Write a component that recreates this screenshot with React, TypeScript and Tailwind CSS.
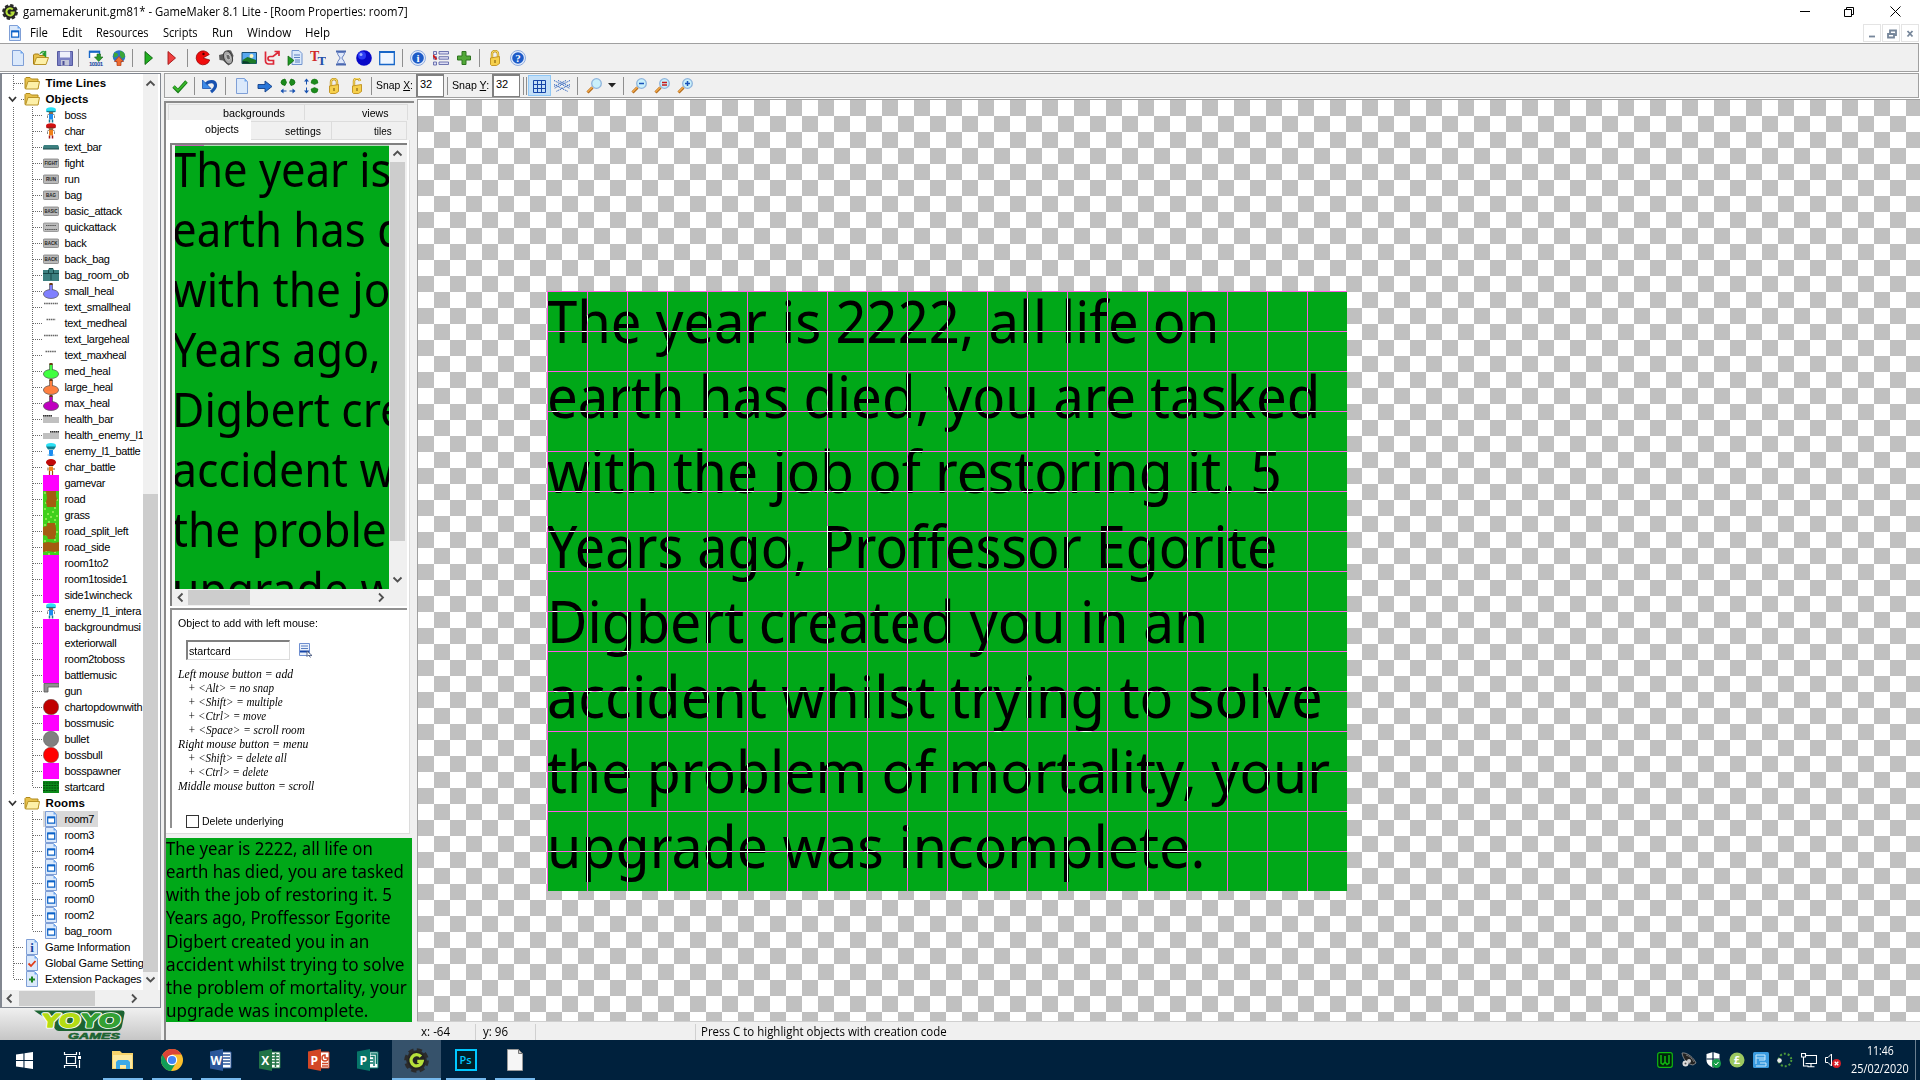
import { useLayoutEffect, useRef, type ReactNode } from "react";

/* Text squeezed or stretched horizontally to an exact width. */
function Fit({ w, className = "", children }: { w: number; className?: string; children: ReactNode }) {
  const ref = useRef<HTMLSpanElement>(null);
  useLayoutEffect(() => {
    const el = ref.current;
    if (el && el.offsetWidth) el.style.transform = `scaleX(${w / el.offsetWidth})`;
  }, [w]);
  return (
    <span className={`block shrink-0 whitespace-nowrap ${className}`} style={{ width: w }}>
      <span ref={ref} className="inline-block origin-left">{children}</span>
    </span>
  );
}

const STORY: [string, number][] = [
  ["The year is 2222, all life on", 672],
  ["earth has died, you are tasked", 773],
  ["with the job of restoring it. 5", 735],
  ["Years ago, Proffessor Egorite", 730],
  ["Digbert created you in an", 661],
  ["accident whilst trying to solve", 776],
  ["the problem of mortality, your", 783],
  ["upgrade was incomplete.", 658],
];

function Card({ className = "" }: { className?: string }) {
  return (
    <div className={`h-[600px] w-[800px] shrink-0 overflow-hidden bg-[#00a818] font-['Noto_Sans'] text-[59px] leading-[75px] text-black ${className}`}>
      <div className="-mt-[8px]">
        {STORY.map(([t, w]) => (
          <Fit key={t} w={w}>{t}</Fit>
        ))}
      </div>
    </div>
  );
}

function Ico({ children, s = 16 }: { children: ReactNode; s?: number }) {
  return (
    <svg width={s} height={s} viewBox="0 0 16 16" className="block shrink-0">{children}</svg>
  );
}

const Page = () => (
  <>
    <path d="M2.5.5h8l3 3v12h-11z" fill="#dbe9fb" stroke="#7f9fd6" />
    <path d="M10.5.5v3h3z" fill="#6fa8f0" />
  </>
);
const Lock = ({ open = false }: { open?: boolean }) => (
  <Ico>
    <path d={open ? "M5 8V4a3 3 0 0 1 6 -1" : "M5 8V4a3 3 0 0 1 6 0v4"} fill="none" stroke="#b88a14" strokeWidth="2.4" />
    <path d={open ? "M5 8V4a3 3 0 0 1 6 -1" : "M5 8V4a3 3 0 0 1 6 0v4"} fill="none" stroke="#f7dc6a" strokeWidth="1.2" />
    <path d="M3.5 8l9-1.500v7l-3 2h-5l-1-1z" fill="#f6d04c" stroke="#c0901c" strokeWidth=".900" />
    <path d="M8 10v3" stroke="#8a6410" strokeWidth="1.200" />
  </Ico>
);
const Ball = ({ t }: { t: string }) => (
  <Ico>
    <circle cx="8" cy="8" r="7.500" fill="#e4edfb" stroke="#8fabdc" />
    <circle cx="8" cy="8" r="5.800" fill="#1d5bc8" />
    <text x="8" y="11.800" textAnchor="middle" className="font-['Liberation_Serif'] text-[11px] font-bold" fill="#fff">{t}</text>
  </Ico>
);
const Lens = ({ sign }: { sign?: ReactNode }) => (
  <Ico>
    <path d="M1.500 14.500l5-5" stroke="#b0691a" strokeWidth="3" />
    <path d="M1.500 14l5-5" stroke="#f3a848" strokeWidth="1.400" />
    <circle cx="10.500" cy="5.500" r="4.800" fill="#c9f0fb" stroke="#8fb4dc" strokeWidth="1.300" />
    {sign}
  </Ico>
);
const DocPage = ({ children }: { children?: ReactNode }) => <Ico><Page />{children}</Ico>;
const RoomIcon = () => (
  <DocPage>
    <path d="M4.700 6.200h7v6h-7z" fill="#fff" stroke="#0b62c8" strokeWidth="1.200" />
    <path d="M4.500 6.500h7.400" stroke="#0b62c8" strokeWidth="1.800" />
  </DocPage>
);
const Folder = () => (
  <Ico>
    <path d="M1 13.500V3.500l1-1h4l1.500 1.500H14v9.500z" fill="#e7c04a" stroke="#b08a1c" />
    <path d="M1.500 14L4 6.500h11.500L14 14z" fill="#fdf0a8" stroke="#b99428" />
  </Ico>
);
const Gear = ({ s = 16 }: { s?: number }) => (
  <Ico s={s}>
    <circle cx="8" cy="8" r="6.600" fill="#2b2b2b" stroke="#2b2b2b" strokeWidth="2.600" strokeDasharray="3.200 1.980" />
    <circle cx="8" cy="8" r="5.600" fill="#222" />
    <path d="M10.800 5.500A3.600 3.600 0 1 0 11.600 8.600H8.500" fill="none" stroke="#b6e03a" strokeWidth="2.100" />
  </Ico>
);

type Item = { x: number; icon: ReactNode };
const Sep = () => <div className="h-[18px] w-px bg-[#8f8f8f]" />;

/* Lays toolbar items out at their centre positions by flow margins. */
function Bar({ items, start }: { items: (Item & { w?: number })[]; start: number }) {
  let at = start;
  return (
    <div className="flex h-full items-center">
      {items.map((it, i) => {
        const w = it.w ?? 16;
        const left = Math.round(it.x - w / 2);
        const gap = left - at;
        at = left + w;
        return <div key={i} className="flex shrink-0 justify-center" style={{ marginLeft: gap, width: w }}>{it.icon}</div>;
      })}
    </div>
  );
}

const MAIN: (Item & { w?: number })[] = [
  { x: 18, icon: <DocPage /> },
  { x: 40.5, icon: <Ico><path d="M.5 14V5l1-1h4l1 1.500h6V14z" fill="#e7c04a" stroke="#a87f14" /><path d="M1 14.500l2.500-7h12L13 14.500z" fill="#fdf0a8" stroke="#b99428" /><path d="M7 4c1-3 4-3.500 5.500-1.500V1M12.800 1v6L9.500 4z" fill="#1d9a2c" stroke="#1d9a2c" strokeWidth=".800" /></Ico> },
  { x: 64.5, icon: <Ico><path d="M.5 1.500h15v14h-15z" fill="#7a80c4" stroke="#5559a0" /><path d="M3 1.500h10v6H3z" fill="#eef0fb" /><path d="M4 10h8v5.500H4z" fill="#c3c6d8" /><path d="M5.500 11h2v4h-2z" fill="#4b4f98" /></Ico> },
  { x: 78, w: 1, icon: <Sep /> },
  { x: 95.5, icon: <Ico><path d="M1.500 8V1.500h10V5" fill="#fff" stroke="#1766c8" strokeWidth="1.400" /><path d="M1 1.800h11" stroke="#1766c8" strokeWidth="2" /><path d="M9 4h3.500v3H15l-4.300 4.500L6.500 7H9z" fill="#2c9b2c" stroke="#17661a" strokeWidth=".600" /><text x="8" y="16" textAnchor="middle" textLength="14" className="font-['Liberation_Sans'] text-[6px] font-bold" fill="#1545a0">10101</text></Ico> },
  { x: 118.5, icon: <Ico><circle cx="8" cy="6.500" r="6.300" fill="#2a72c8" /><path d="M3 2.500c2 0 5 1 4 3S3 6 2.500 9M9 .8c4 1 5 3 5 6l-3 2-2-3z" fill="#3aa53a" /><path d="M6 15.500V11.500H3.500L8 6.500l4.500 5H10v4z" fill="#ef6c30" stroke="#b83a12" strokeWidth=".700" /></Ico> },
  { x: 132, w: 1, icon: <Sep /> },
  { x: 149, icon: <Ico><path d="M4 1.500v13l7.500-6.500z" fill="#22b022" stroke="#0d5f0d" strokeWidth=".900" /></Ico> },
  { x: 172, icon: <Ico><path d="M4 1.500v13l7.500-6.500z" fill="#f04040" stroke="#a01414" strokeWidth=".900" /></Ico> },
  { x: 187, w: 1, icon: <Sep /> },
  { x: 203, icon: <Ico><path d="M8 8l6.300-3.500A7 7 0 1 0 14.800 10z" fill="#f00c0c" stroke="#8c0000" strokeWidth=".700" /><circle cx="8.500" cy="4" r="1.200" fill="#500" /></Ico> },
  { x: 226, icon: <Ico><path d="M1 5l4-1 5-4 3 .5 2.500 5L14 12l-3.500 3.500L5 10.500 1.500 10z" fill="#5e5e5e" /><ellipse cx="10" cy="7.500" rx="4.200" ry="6.800" transform="rotate(-20 10 7.500)" fill="#a8a8a8" stroke="#3c3c3c" /><ellipse cx="10.300" cy="7.200" rx="2" ry="3" transform="rotate(-20 10 7.500)" fill="#666" stroke="#e0e0e0" strokeWidth=".700" /></Ico> },
  { x: 249, icon: <Ico><path d="M1 2.500h14.500v11H1z" fill="#58a8f0" stroke="#174f78" /><path d="M1.500 10l5-3 8.500 3v3.500H1.500z" fill="#1c7a28" /><path d="M1.500 11l5 .5 3 2h-8z" fill="#0b3c2c" /><circle cx="10.500" cy="6" r="2" fill="#fdf6c0" /></Ico> },
  { x: 271.5, icon: <Ico><path d="M1.500 1.500v9.500a3 3 0 0 0 3 3h5v-3.500H6a1.500 1.500 0 0 1 0-4h3l5-4M10.500 1.500h4.500v4.500" fill="none" stroke="#dc2838" strokeWidth="1.700" /></Ico> },
  { x: 295, icon: <Ico><path d="M5 .5h7l3 3v11H5z" fill="#dbe9fb" stroke="#6f92ce" /><path d="M7 5h6M7 7.500h6M8 10h5M8 12h5" stroke="#5a7fc0" /><path d="M1 6v9.500L7 10.500z" fill="#1f9a24" stroke="#0d5f0d" strokeWidth=".700" /></Ico> },
  { x: 318, icon: <Ico><text x="0" y="11" className="font-['Liberation_Serif'] text-[14px] font-bold" fill="#d02828">T</text><text x="7.500" y="14.500" className="font-['Liberation_Serif'] text-[13px] font-bold" fill="#2450a8">T</text></Ico> },
  { x: 341, icon: <Ico><path d="M3 1.500h10M3 14.500h10" stroke="#4a68b0" strokeWidth="2" /><path d="M4.500 2.500c0 3.500 2.500 4 2.500 5.500s-2.500 2-2.500 5.500h7C11.500 10 9 9.500 9 8s2.500-2 2.500-5.500z" fill="#dfe8fa" stroke="#6680c0" /></Ico> },
  { x: 364, icon: <Ico><circle cx="8" cy="8" r="7.800" fill="#0808c8" /><circle cx="6" cy="5.500" r="4" fill="#2c3cf4" /><circle cx="5" cy="4.500" r="1.500" fill="#9fb0ff" /></Ico> },
  { x: 387, icon: <Ico><path d="M.7 1.700h14.600v12.800H.7z" fill="#eff6ff" stroke="#1766c8" strokeWidth="1.300" /><path d="M.5 2h15" stroke="#1766c8" strokeWidth="2" /></Ico> },
  { x: 402, w: 1, icon: <Sep /> },
  { x: 418, icon: <Ball t="i" /> },
  { x: 441, icon: <Ico><path d="M.5 1.500h3v3h-3zM.5 6.700h3v2.500h-3zM.5 12h3v3h-3zM6 1.500h9.500v2.500H6zM6 6.700h9.500v2.500H6zM6 12h9.500v2.500H6z" fill="#dcdcf2" stroke="#6068a8" strokeWidth=".900" /><path d="M0 5l3.500 4.500" stroke="#d01c1c" strokeWidth="2" /></Ico> },
  { x: 464, icon: <Ico><path d="M6 1.500h4V6h4.500v4H10v4.500H6V10H1.500V6H6z" fill="#52a838" stroke="#2f7420" /></Ico> },
  { x: 479, w: 1, icon: <Sep /> },
  { x: 495, icon: <Lock /> },
  { x: 518, icon: <Ball t="?" /> },
];

const SnapLabel = ({ c }: { c: string }) => (
  <Fit w={37} className="font-['Liberation_Sans'] text-[11.500px] leading-[15px]">Snap <u>{c}</u>:</Fit>
);
const SnapBox = () => (
  <div className="h-[23px] w-[28px] border-t-2 border-l-2 border-r border-b border-[#808080] bg-white pl-[2px] font-['Liberation_Sans'] text-[11px] leading-[17px]">32</div>
);

const ROOMBAR: (Item & { w?: number })[] = [
  { x: 180, icon: <Ico><path d="M1.500 8.500L6 13 14.500 3.500" fill="none" stroke="#177a17" strokeWidth="3.400" /><path d="M1.800 8.500L6 12.500 14.200 3.800" fill="none" stroke="#3cb82c" strokeWidth="1.800" /></Ico> },
  { x: 194, w: 1, icon: <Sep /> },
  { x: 210, icon: <Ico><path d="M3.500 6.500C7 2.500 13 2.500 13.500 7c.3 3-2 5-4.500 7" fill="none" stroke="#1852b0" strokeWidth="3.200" /><path d="M.5 2v8.500H9z" fill="#3d8be8" stroke="#1852b0" strokeWidth=".800" /></Ico> },
  { x: 225, w: 1, icon: <Sep /> },
  { x: 242, icon: <DocPage /> },
  { x: 265, icon: <Ico><path d="M1 6.500h7V3l7 5.500L8 14v-3.500H1z" fill="#2a76d8" stroke="#123f88" strokeWidth=".900" /></Ico> },
  { x: 288, icon: <Ico><path d="M5 1L6.500 4.500 5 7.500Q1 7 1 4.300T5 1zM11 1L9.500 4.500 11 7.500Q15 7 15 4.300T11 1z" fill="#1c8a1c" stroke="#0d6f0d" strokeWidth=".800" /><path d="M1.500 13h5M9.500 13h5" stroke="#1852b0" /><path d="M3.500 10.500v5L.5 13zM12.500 10.500v5l3-2.500z" fill="#1852b0" /></Ico> },
  { x: 311, icon: <Ico><path d="M8 5q0-4 3.500-4T15 5l-3.500 1.500zM8 11q0 4 3.500 4t3.500-4l-3.500-1.500z" fill="#1c8a1c" stroke="#0d6f0d" strokeWidth=".500" /><path d="M3.500 1.500v5M3.500 9.500v5" stroke="#1852b0" /><path d="M1 3.500h5L3.500.5zM1 12.500h5l-2.500 3z" fill="#1852b0" /></Ico> },
  { x: 334, icon: <Lock /> },
  { x: 357, icon: <Lock open /> },
  { x: 371, w: 1, icon: <Sep /> },
  { x: 394, w: 37, icon: <SnapLabel c="X" /> },
  { x: 430, w: 28, icon: <SnapBox /> },
  { x: 447, w: 1, icon: <Sep /> },
  { x: 470, w: 37, icon: <SnapLabel c="Y" /> },
  { x: 506, w: 28, icon: <SnapBox /> },
  { x: 523, w: 1, icon: <Sep /> },
  { x: 526, w: 1, icon: <Sep /> },
  { x: 539.5, w: 23, icon: <div className="flex h-[21px] w-[23px] items-center justify-center border border-[#90c8f6] bg-[#c4e0f8]"><Ico><path d="M1.500 2.500h12v12h-12zM1.500 6.500h12M1.500 10.500h12M5.500 2.500v12M9.500 2.500v12" fill="none" stroke="#1545a8" /></Ico></div> },
  { x: 562, icon: <Ico><path d="M0 2.500l16 8M0 6.500l14 7M4 2.500l12 6M16 2.500l-16 8M16 6.500l-14 7M12 2.500L0 8.500" stroke="#1852b8" strokeWidth=".900" strokeDasharray="1.500 1" /></Ico> },
  { x: 577, w: 1, icon: <Sep /> },
  { x: 594, icon: <Lens /> },
  { x: 612, w: 8, icon: <svg width="8" height="5" className="block"><path d="M0 0h8L4 4.500z" fill="#222" /></svg> },
  { x: 623, w: 1, icon: <Sep /> },
  { x: 639, icon: <Lens sign={<path d="M8 5.500h5" stroke="#1852b8" strokeWidth="1.500" />} /> },
  { x: 662, icon: <Lens sign={<path d="M8 4.500h5M8 7h5" stroke="#c81818" strokeWidth="1.300" />} /> },
  { x: 685, icon: <Lens sign={<path d="M8 5.500h5M10.500 3v5" stroke="#1852b8" strokeWidth="1.500" />} /> },
];

/* Thumbnails of the objects in the resource tree */
const Pink = () => <div className="h-4 w-4 bg-[#ff00ff]" />;
const Tag = ({ t }: { t: string }) => (
  <Ico><rect x=".4" y="4" width="15.200" height="8.500" rx="1" fill="#b8b8b8" stroke="#7c7c7c" strokeWidth=".800" /><text x="8" y="10.400" textAnchor="middle" textLength={t.length > 3 ? 13 : 10} lengthAdjust="spacingAndGlyphs" className="font-['Liberation_Sans'] text-[6px] font-bold" fill="#222">{t}</text></Ico>
);
const Potion = ({ c }: { c: string }) => (
  <Ico><path d="M6.500 1h3v6h-3z" fill={c} stroke="#444" strokeWidth=".600" /><path d="M6.500 0h3v2h-3z" fill="#6b3a10" /><ellipse cx="8" cy="11" rx="7.600" ry="4.500" fill={c} stroke="#555" strokeWidth=".700" /><path d="M7 5h2v3H7z" fill={c} /></Ico>
);
const Guy = ({ a, b, c = "#a01818" }: { a: string; b: string; c?: string }) => (
  <Ico><ellipse cx="8" cy="3" rx="5" ry="2.700" fill={a} /><path d="M3.500 4.500h9" stroke={c} strokeWidth="1.200" /><path d="M6 5h4v2H6z" fill="#8a6a4a" /><path d="M4 8.500l2-1.500M12 8.500l-2-1.500M4.500 9v2M11.500 9v2" stroke="#888" /><path d="M6 7h4v5.500H6z" fill={b} /><path d="M6.500 12.500v3M9.500 12.500v3" stroke={c} strokeWidth="1.500" /></Ico>
);
const Tiny = ({ w }: { w: number }) => (
  <Ico><path d={`M${8 - w / 2} 4.500h${w}`} stroke="#666" strokeWidth="1.600" strokeDasharray="1.600 .6" /></Ico>
);
const Earth = ({ d }: { d: string }) => (
  <Ico><path d="M0 0h16v16H0z" fill="#3fd01c" /><path d="M1 2h2M11 1h2M4 7h2M9 5h2M13 9h2M2 12h2M7 10h2M11 13h2M5 15h2" stroke="#a4f05c" strokeWidth="1.500" /><path d={d} fill="#a45c10" /></Ico>
);
const Dot = ({ c }: { c: string }) => <Ico><circle cx="8" cy="8" r="7.700" fill={c} stroke="#555" strokeWidth=".500" /></Ico>;
const Boss = () => <Guy a="#2ce0f4" b="#1c8cf0" c="#147890" />;
const BossBattle = () => (
  <Ico><ellipse cx="8" cy="2.500" rx="5" ry="2.500" fill="#2ce0f4" /><path d="M3 3.500h10l-2 3H5z" fill="#127c8c" /><path d="M6 7h4v6H6z" fill="#1c8cf0" /><path d="M4.500 12h2M9.500 12h2" stroke="#9ad0f0" strokeWidth="1.500" /></Ico>
);
const Char = () => <Guy a="#d01010" b="#f08018" />;
const CharBattle = () => (
  <Ico><ellipse cx="8" cy="3.300" rx="5" ry="3.300" fill="#c00808" /><path d="M5.500 6.500h5" stroke="#5a1808" /><path d="M6 7.500h4V12H6z" fill="#f08018" /><path d="M5 8.500v3M11 9v2" stroke="#8a5a28" /><path d="M6.500 12v4M9.500 12v4" stroke="#a04808" strokeWidth="1.200" /></Ico>
);
const Bar2 = ({ r = false }: { r?: boolean }) => <Ico><path d={r ? "M0 6h7V4.500h9V12H0z" : "M0 4h9v2h7v6H0z"} fill="#c0c0c0" /><path d={r ? "M7 4.800h9" : "M0 4.800h9"} stroke="#333" strokeWidth="1.600" strokeDasharray="1.500 .5" /></Ico>;

const OBJECTS: [string, ReactNode][] = [
  ["boss", <Boss />], ["char", <Char />],
  ["text_bar", <Ico><path d="M1 6h14l1 2v2H0V8z" fill="#3c8080" /><path d="M0 10h16" stroke="#1c4848" /></Ico>],
  ["fight", <Tag t="FIGHT" />], ["run", <Tag t="RUN" />], ["bag", <Tag t="BAG" />], ["basic_attack", <Tag t="BASIC" />],
  ["quickattack", <Ico><rect x=".4" y="4" width="15.200" height="8.500" rx="1" fill="#bdbdbd" stroke="#8c8c8c" strokeWidth=".800" /><path d="M3 6.500h10M2 10.500h12" stroke="#555" strokeDasharray="1.500 .6" /></Ico>],
  ["back", <Tag t="BACK" />], ["back_bag", <Tag t="BACK" />],
  ["bag_room_ob", <Ico><path d="M0 3h5l1-2h4l1 2h5v11H0z" fill="#3c8080" /><path d="M6 1.500h4M0 6.500h16M5.500 3v4M10.500 3v4M8 7v6" stroke="#174848" /></Ico>],
  ["small_heal", <Potion c="#8080ff" />],
  ["text_smallheal", <Tiny w={14} />], ["text_medheal", <Tiny w={9} />], ["text_largeheal", <Tiny w={14} />], ["text_maxheal", <Tiny w={11} />],
  ["med_heal", <Potion c="#40ff40" />], ["large_heal", <Potion c="#ff8040" />], ["max_heal", <Potion c="#c000c0" />],
  ["health_bar", <Bar2 />], ["health_enemy_l1", <Bar2 r />],
  ["enemy_l1_battle", <BossBattle />], ["char_battle", <CharBattle />], ["gamevar", <Pink />],
  ["road", <Earth d="M3 0h10v5l1 3-1 3v5H4l-1-5 1-4z" />], ["grass", <Earth d="" />],
  ["road_split_left", <Earth d="M4 0h8l1 5v6l-1 5H5l-1-3-4-1V4l4-1z" />], ["road_side", <Earth d="M0 4l5-1 6 1 5-1v9l-5 1-6-1-5 1z" />],
  ["room1to2", <Pink />], ["room1toside1", <Pink />], ["side1wincheck", <Pink />], ["enemy_l1_intera", <Boss />],
  ["backgroundmusi", <Pink />], ["exteriorwall", <Pink />], ["room2toboss", <Pink />], ["battlemusic", <Pink />],
  ["gun", <Ico><path d="M1 .5h15v3.500H5V9H1z" fill="#909090" stroke="#555" strokeWidth=".800" /></Ico>],
  ["chartopdownwith", <Dot c="#c00000" />], ["bossmusic", <Pink />], ["bullet", <Dot c="#808080" />], ["bossbull", <Dot c="#ff0000" />],
  ["bosspawner", <Pink />],
  ["startcard", <Ico><path d="M0 2h16v12H0z" fill="#0b8a1a" /><path d="M0 4h16M0 6.500h15M0 9h16M0 11.500h14" stroke="#044c0a" strokeDasharray="2 .8" /></Ico>],
];
const ROOMS = ["room7", "room3", "room4", "room6", "room5", "room0", "room2", "bag_room"];

/* Dotted tree connectors in front of a node */
function Lines({ d, w }: { d: string; w: number }) {
  return <svg width={w} height="16" className="block shrink-0"><path d={d} fill="none" stroke="#6a6a6a" strokeDasharray="1 1" /></svg>;
}
function Leaf({ name, icon, last, sel }: { name: string; icon: ReactNode; last?: boolean; sel?: boolean }) {
  return (
    <div className="flex h-4 w-[250px] items-center">
      <Lines w={43} d={`M13.500 0v16M32.500 0v${last ? 8 : 16}M33 8.500h10`} />
      <div className={`flex h-4 items-center ${sel ? "bg-[#d9d9d9] pr-[4px]" : ""}`}>
        {icon}
        <span className="ml-[5.500px] text-[11px] leading-4 tracking-[-0.320px] whitespace-nowrap">{name}</span>
      </div>
    </div>
  );
}
function Branch({ name, open }: { name: string; open: boolean }) {
  return (
    <div className="flex h-4 items-center">
      {open ? (
        <svg width="24" height="16" className="block shrink-0"><path d="M9 6l3.500 4L16 6" fill="none" stroke="#333" strokeWidth="1.800" /><path d="M21 8.500h3" stroke="#6a6a6a" strokeDasharray="1 1" /></svg>
      ) : (
        <Lines w={24} d="M13.500 0v16M14 8.500h10" />
      )}
      <Folder />
      <span className="ml-[5.500px] text-[11.500px] leading-4 font-bold tracking-[0.100px] whitespace-nowrap">{name}</span>
    </div>
  );
}
function Root({ name, icon, last }: { name: string; icon: ReactNode; last?: boolean }) {
  return (
    <div className="flex h-4 w-[250px] items-center">
      <Lines w={24} d={`M13.500 0v${last ? 8 : 16}M14 8.500h10`} />
      {icon}
      <span className="ml-[5px] text-[11px] leading-4 tracking-[-0.180px] whitespace-nowrap">{name}</span>
    </div>
  );
}

const ARROWS = { up: "M3.500 9.500L7.500 5.500l4 4", down: "M3.500 5.500l4 4 4-4", left: "M9.500 3.500L5.500 7.500l4 4", right: "M6 3.500l4 4-4 4" };
const Arrow = ({ d }: { d: keyof typeof ARROWS }) => (
  <svg width="15" height="15" className="block shrink-0"><path d={ARROWS[d]} fill="none" stroke="#505050" strokeWidth="1.800" /></svg>
);

const Under = ({ children, on, active }: { children: ReactNode; on?: boolean; active?: boolean }) => (
  <div className={`flex h-10 w-[49px] flex-col items-center ${active ? "bg-[#36526b]" : ""}`}>
    <div className="flex h-[38px] items-center justify-center pt-[2px]">{children}</div>
    <div className={`h-[2px] ${active ? "w-full" : "w-10"} ${on || active ? "bg-[#76b9ed]" : ""}`} />
  </div>
);
const Office = ({ c, t, kind }: { c: string; t: string; kind: string }) => (
  <svg width="24" height="24" viewBox="0 0 24 24" className="block">
    <path d="M12 4h10v16H12z" fill="#fff" stroke={c} />
    <path d={kind} fill="none" stroke={c} strokeWidth="1.500" />
    <path d="M1 3.500L14 1v22L1 20.500z" fill={c} />
    <text x="7.300" y="16.500" textAnchor="middle" className="font-['Open_Sans'] text-[12px] font-bold" fill="#fff">{t}</text>
  </svg>
);

const MENU: [string, number][] = [["File", 18], ["Edit", 20], ["Resources", 53], ["Scripts", 35], ["Run", 21], ["Window", 44], ["Help", 25]];

const HINTS: [string, boolean, number][] = [
  ["Left mouse button = add", false, 115], ["+ <Alt> = no snap", true, 86], ["+ <Shift> = multiple", true, 95], ["+ <Ctrl> = move", true, 78],
  ["+ <Space> = scroll room", true, 117], ["Right mouse button = menu", false, 130], ["+ <Shift> = delete all", true, 99], ["+ <Ctrl> = delete", true, 80],
  ["Middle mouse button = scroll", false, 136],
];

function Explorer() {
  return (
    <aside className="flex h-[967px] w-[164px] shrink-0 flex-col bg-[#f0f0f0]">
      <div className="flex h-[935px] w-[161px] flex-col border border-l-2 border-[#828790] bg-white">
        <div className="flex h-[916px]">
          <div className="-ml-[2px] w-[143px] shrink-0 overflow-hidden pt-px">
            <Branch name="Time Lines" open={false} />
            <Branch name="Objects" open />
            {OBJECTS.map(([n, ic], i) => <Leaf key={n} name={n} icon={ic} last={i === OBJECTS.length - 1} />)}
            <Branch name="Rooms" open />
            {ROOMS.map((n, i) => <Leaf key={n} name={n} icon={<RoomIcon />} sel={i === 0} last={i === ROOMS.length - 1} />)}
            <Root name="Game Information" icon={<DocPage><text x="8" y="13" textAnchor="middle" className="font-['Liberation_Serif'] text-[13px] font-bold" fill="#1545a0">i</text></DocPage>} />
            <Root name="Global Game Settings" icon={<DocPage><path d="M4.500 8.500L7 11l4.500-5" fill="none" stroke="#e03c18" strokeWidth="1.800" /></DocPage>} />
            <Root last name="Extension Packages" icon={<DocPage><path d="M8 5.500v6M5 8.500h6" stroke="#1c8420" strokeWidth="2" /></DocPage>} />
          </div>
          <div className="flex w-[15px] flex-col bg-[#f0f0f0] pt-[2px]">
            <Arrow d="up" />
            <div className="mt-[403px] h-[478px] w-[15px] bg-[#cdcdcd]" />
            <Arrow d="down" />
          </div>
        </div>
        <div className="flex h-[17px] items-center bg-[#f0f0f0]">
          <Arrow d="left" />
          <div className="ml-[2px] h-[15px] w-[76px] bg-[#cdcdcd]" />
          <div className="ml-[31px]"><Arrow d="right" /></div>
        </div>
      </div>
      <div className="flex h-8 w-[161px] justify-center bg-linear-to-b from-[#f0f0f0] to-[#c6c6c6]">
        <svg width="94" height="32" viewBox="0 0 94 32" className="block">
          <path d="M0 2.500h88q3 0 2.500 3L88 18q-.8 5-6 5H25q-3 0-4.500-3L15 12 5 6z" fill="#1c6432" />
          <g className="font-['Liberation_Sans'] font-bold" strokeLinejoin="round">
            <g transform="translate(4 -1) skewX(-8)">
              <text x="6" y="20" textLength="38" lengthAdjust="spacingAndGlyphs" className="text-[19px]" fill="none" stroke="#fff" strokeWidth="3.200">YO</text>
              <text x="45" y="20" textLength="39" lengthAdjust="spacingAndGlyphs" className="text-[19px]" fill="none" stroke="#fff" strokeWidth="3.200">YO</text>
              <text x="6" y="20" textLength="38" lengthAdjust="spacingAndGlyphs" className="text-[19px]" fill="#b4dc14" stroke="#b4dc14" strokeWidth="1.600">YO</text>
              <text x="45" y="20" textLength="39" lengthAdjust="spacingAndGlyphs" className="text-[19px]" fill="#34a034" stroke="#34a034" strokeWidth="1.600">YO</text>
            </g>
            <text x="34" y="31" textLength="52" lengthAdjust="spacingAndGlyphs" className="text-[9.500px] italic" fill="#1c6432" stroke="#1c6432" strokeWidth=".600">GAMES</text>
          </g>
        </svg>
      </div>
    </aside>
  );
}

function RoomPanel() {
  return (
    <section className="mt-[2px] flex h-[939px] w-[250px] shrink-0 flex-col border-t-2 border-l-2 border-[#8a8a8a] bg-[#f0f0f0]">
      <div className="flex h-[17px] pt-px pl-[2px] text-[11px] leading-[16px]">
        <div className="flex w-[137px] justify-end border border-b-0 border-[#dcdcdc] pr-[19px]"><Fit w={62}>backgrounds</Fit></div>
        <div className="flex w-[103px] justify-end border border-b-0 border-l-0 border-[#dcdcdc] pr-[18px]"><Fit w={27}>views</Fit></div>
      </div>
      <div className="flex h-[20px] text-[11px]">
        <div className="flex w-[85px] justify-end bg-white pr-[12px] leading-[18px]"><Fit w={34}>objects</Fit></div>
        <div className="mt-[1px] flex h-[19px] w-[81px] justify-end border border-l-0 border-[#dcdcdc] pr-[10px] leading-[18px]"><Fit w={36}>settings</Fit></div>
        <div className="mt-[1px] flex h-[19px] w-[75px] justify-end border border-l-0 border-[#dcdcdc] pr-[14px] leading-[18px]"><Fit w={18}>tiles</Fit></div>
      </div>
      <div className="h-[694px] w-[244px] border-r border-b border-[#dcdcdc] bg-white pt-[3px] pl-[4px]">
        <div className="flex h-[463px] w-[237px] flex-col border-t-2 border-l-2 border-[#808080] bg-[#f0f0f0]">
          <div className="flex h-[444px]">
            <div className="ml-[3px] h-[444px] w-[214px] overflow-hidden">
              <div className="h-px w-[29px] bg-[#ff57e7]" />
              <Card className="-mt-px -ml-[3px] origin-top-left scale-[0.8] [clip-path:inset(1px_0_0_0)]" />
            </div>
            <div className="ml-px flex w-[15px] flex-col pt-px">
              <Arrow d="up" />
              <div className="mt-[1px] h-[379px] bg-[#cdcdcd]" />
              <div className="mt-[31px]"><Arrow d="down" /></div>
            </div>
          </div>
          <div className="flex h-[17px] items-center pl-[1px]">
            <Arrow d="left" />
            <div className="h-[15px] w-[62px] bg-[#cdcdcd]" />
            <div className="ml-[123px]"><Arrow d="right" /></div>
          </div>
        </div>
        <div className="mt-[2px] flex h-[220px] w-[237px] flex-col items-start border-t-2 border-l-2 border-[#909090] pl-[6px] text-[11px]">
          <Fit w={140} className="mt-[5px] leading-4">Object to add with left mouse:</Fit>
          <div className="mt-[9px] ml-[8px] flex items-center">
            <div className="h-[20px] w-[104px] border-t-2 border-r border-b border-l-2 border-[#808080] border-r-[#dcdcdc] border-b-[#dcdcdc] pl-px leading-[18px]"><Fit w={42}>startcard</Fit></div>
            <div className="ml-[8px]">
              <Ico><path d="M1.500 1.500h10v12h-10z" fill="#eaf1fc" stroke="#6f8fd0" /><path d="M3 4h7M3 6.500h7" stroke="#5a7fc0" /><path d="M2 9.500h9" stroke="#1545a8" strokeWidth="2" /><path d="M9 9v5.500l1.500-1.500 2 2.500M9 9l5 4.500-3 .2" stroke="#4a5a80" strokeWidth=".900" fill="#fff" /></Ico>
            </div>
          </div>
          <div className="mt-[7px] font-['Liberation_Serif'] text-[12px] leading-[14px] italic">
            {HINTS.map(([t, ind, w]) => <Fit key={t} w={w} className={ind ? "ml-[10px]" : ""}>{t}</Fit>)}
          </div>
          <div className="mt-[20px] ml-[8px] flex items-center">
            <div className="h-[13px] w-[13px] border border-[#333]" />
            <Fit w={82} className="ml-[3px] leading-4">Delete underlying</Fit>
          </div>
        </div>
      </div>
      <div className="mt-[4px] h-[184px] w-[246px] shrink-0 overflow-hidden bg-[#00a818]">
        <Card className="mt-[0.500px] origin-top-left scale-x-[0.3075] scale-y-[0.3085]" />
      </div>
    </section>
  );
}

function Canvas() {
  return (
    <main className="min-w-0 flex-1 pl-[3px]">
      <div className="h-[922px] overflow-hidden border-t border-l border-[#a0a0a0] bg-[repeating-conic-gradient(#c0c0c0_0_25%,#fff_0_50%)] bg-size-[32px_32px] pt-[191px] pl-[129px]">
        <div className="relative isolate h-[600px] w-[800px]">
          <Card />
          <div className="absolute inset-0 bg-[linear-gradient(to_right,#fff_1px,transparent_1px),linear-gradient(to_bottom,#fff_1px,transparent_1px)] bg-size-[40px_40px] mix-blend-difference" />
        </div>
      </div>
      <div className="flex h-[19px] items-center border-t border-[#d0d0d0] bg-[#f0f0f0] pt-px font-['Open_Sans'] text-[12px] leading-[16px]">
        <div className="flex h-[16px] w-[59px] border-r border-[#d0d0d0] pl-[4px]"><Fit w={29}>x: -64</Fit></div>
        <div className="flex h-[16px] w-[60px] border-r border-[#d0d0d0] pl-[7px]"><Fit w={25}>y: 96</Fit></div>
        <div className="h-[16px] w-[160px] border-r border-[#d0d0d0]" />
        <Fit w={246} className="ml-[5px] h-[16px]">Press C to highlight objects with creation code</Fit>
      </div>
    </main>
  );
}

function Taskbar() {
  return (
    <footer className="flex h-10 bg-[#00213d] text-white">
      <Under><svg width="17" height="17" viewBox="0 0 16 16"><path d="M0 2.300L7 1.300V7.500H0zM8 1.200L16 0v7.500H8zM0 8.500h7v6.200l-7-1zM8 8.500h8V16l-8-1.200z" fill="#fff" /></svg></Under>
      <div className="-ml-[2px] flex">
        <Under><svg width="18" height="18" viewBox="0 0 18 18"><path d="M3.500 5.500h9v7h-9zM1.500 1v2.500h12V1M1.500 17v-2.500h12V17M16.500 1v3M16.500 9v8" fill="none" stroke="#fff" strokeWidth="1.200" /><path d="M15 5h3v3h-3z" fill="#fff" /></svg></Under>
      </div>
      <div className="ml-[2px] flex">
        <Under on><svg width="24" height="24" viewBox="0 0 24 24"><path d="M1 3h8l2 2h11v16H1z" fill="#f7d36b" /><path d="M2 7h19v13H2z" fill="#fde9a0" /><path d="M5 21v-7l2-2h10l2 2v7h-4v-4H9v4z" fill="#3ba9e8" /></svg></Under>
        <Under on><svg width="22" height="22" viewBox="0 0 22 22"><circle cx="11" cy="11" r="11" fill="#fbc02d" /><path d="M11 11L1.500 5.500A11 11 0 0 1 20.500 5.500H11z" fill="#db4437" /><path d="M1.500 5.500A11 11 0 0 0 10 22l5.200-8.500L11 11z" fill="#0f9d58" /><path d="M1.500 5.500L6.300 13.500 11 6z" fill="#db4437" /><circle cx="11" cy="11" r="5.200" fill="#fff" /><circle cx="11" cy="11" r="4.100" fill="#4285f4" /></svg></Under>
        <Under on><Office t="W" c="#2b579a" kind="M14 7h7M14 10h7M14 13h7M14 16h7" /></Under>
        <Under><Office t="X" c="#217346" kind="M14 7h7M14 10h7M14 13h7M14 16h7M17.500 5v14" /></Under>
        <Under><Office t="P" c="#d24726" kind="M18 7a3 3 0 1 0 3 3h-3zM15 15.500h6M15 18h6" /></Under>
        <Under><Office t="P" c="#077568" kind="M14.500 8.500H18V18M14.500 6h6v10M14 12h3M14 15h3" /></Under>
        <Under active><Gear s={25} /></Under>
        <Under on><div className="h-[22px] w-[22px] border-2 border-[#00c8ff] bg-[#001d26] text-center font-['Open_Sans'] text-[11px] leading-[17px] font-semibold text-[#00c8ff]">Ps</div></Under>
        <Under on><svg width="16" height="22" viewBox="0 0 16 22"><path d="M.5.5h11l4 4v17H.5z" fill="#f6f6f6" stroke="#999" /><path d="M11.500.5v4h4z" fill="#ccc" stroke="#777" /></svg></Under>
      </div>
      <div className="ml-auto flex items-center">
        <div className="mr-[10px] flex items-center gap-[8px]">
          <Ico><rect x=".7" y=".7" width="14.600" height="14.600" rx="2" fill="#00210c" stroke="#10b810" strokeWidth="1.200" /><path d="M4 3v8l2 1.500L8 10l2 2.500 2-1.500V3M8 4v6" fill="none" stroke="#10b810" strokeWidth="1.500" /></Ico>
          <Ico><path d="M1 1c5-1 12 5 14 10l-3 2C6 12 2 7 1 1z" fill="#222" stroke="#999" strokeWidth=".800" /><path d="M5 3c3 1 6 3 8 7" stroke="#777" fill="none" /><circle cx="4.500" cy="11.500" r="3" fill="#ddd" /><circle cx="8" cy="9" r="2" fill="#ccc" /><circle cx="4.500" cy="11.500" r="1" fill="#555" /></Ico>
          <Ico><path d="M8 0l6.500 2v6c0 4-3 6-6.500 7.500C4.500 14 1.500 12 1.500 8V2z" fill="#fff" /><path d="M8 0v15M1.500 7h13" stroke="#00213d" strokeWidth="1.200" /><circle cx="11.500" cy="11.500" r="4.500" fill="#16a04a" /><path d="M9.500 11.500l1.500 1.500 2.500-3" fill="none" stroke="#fff" /></Ico>
          <Ico><circle cx="8" cy="8" r="7.500" fill="#9cc860" /><text x="8" y="12.200" textAnchor="middle" className="font-['Open_Sans'] text-[11px] font-bold" fill="#fff">£</text></Ico>
          <Ico><rect width="16" height="16" rx="1.500" fill="#3a9be0" /><path d="M3 12V3h9v5H6M3 6h9M7 11h6v3H3" fill="none" stroke="#c8e8fb" /></Ico>
          <Ico><circle cx="8" cy="8" r="6.300" fill="none" stroke="#4c9a3c" strokeWidth="2" strokeDasharray="2 1.960" /><circle cx="2.500" cy="8.500" r="2.300" fill="#e8e8e8" /></Ico>
          <Ico><path d="M4.500 3.500h11v8h-11M10 12v2.500M6.500 14.800h7M.5 1.500h4v3.500h-4zM2.500 5v9h5" fill="none" stroke="#fff" strokeWidth="1.100" /></Ico>
          <Ico><path d="M.5 5.500h2.500L6.500 2v12L3 10.500H.5z" fill="none" stroke="#fff" /><circle cx="11.500" cy="11.500" r="4.500" fill="#d81e28" /><path d="M9.700 9.700l3.600 3.600M13.300 9.700l-3.600 3.600" stroke="#fff" strokeWidth="1.300" /></Ico>
        </div>
        <div className="flex w-[58px] flex-col items-center font-['Open_Sans'] text-[12px] leading-[18px]">
          <Fit w={27}>11:46</Fit>
          <Fit w={58}>25/02/2020</Fit>
        </div>
        <div className="ml-[6px] h-10 w-px bg-[#6a7f91]" />
        <div className="w-1" />
      </div>
    </footer>
  );
}

export default function App() {
  return (
    <div className="flex h-[1080px] w-[1920px] flex-col overflow-hidden bg-white font-['Liberation_Sans',sans-serif] text-black">
      <header className="flex h-[23px] items-center pl-[2px]">
        <Gear />
        <Fit w={385} className="ml-[5px] font-['Open_Sans'] text-[12px] leading-[23px]">gamemakerunit.gm81* - GameMaker 8.1 Lite - [Room Properties: room7]</Fit>
        <svg width="110" height="12" className="mr-[18px] ml-auto block"><path d="M8 5.500h10M52.500 3.500h7v7h-7zM54.500 3V1.500h7v7H60M98.500.5l10 10M108.500.5l-10 10" fill="none" stroke="#000" /></svg>
      </header>
      <nav className="flex h-[20px] items-center pl-[7px] font-['Open_Sans'] text-[12px] leading-[18px]">
        <RoomIcon />
        <div className="ml-[7px] flex gap-[14px]">
          {MENU.map(([t, w]) => <Fit key={t} w={w}>{t}</Fit>)}
        </div>
        <div className="mr-px ml-auto flex gap-px">
          {["M5 11.500h6", "M5 9h6v3.500H5zM7 8V5.500h6V10h-2", "M5.500 6l5 5.500M10.500 6l-5 5.500"].map((d) => (
            <div key={d} className="h-[18px] w-[18px] border border-[#e4e4e4]"><svg width="16" height="16"><path d={d} fill="none" stroke="#76869a" strokeWidth="1.800" /></svg></div>
          ))}
        </div>
      </nav>
      <div className="mr-px h-[29px] shrink-0 border border-l-0 border-[#a0a0a0] bg-[#f0f0f0]"><Bar items={MAIN} start={0} /></div>
      <div className="mt-px flex h-[967px] shrink-0">
        <Explorer />
        <div className="flex min-w-0 flex-1 flex-col">
          <div className="mr-px h-[25px] shrink-0 border border-[#a0a0a0] bg-[#f0f0f0]"><Bar items={ROOMBAR} start={165} /></div>
          <div className="mt-px flex h-[941px] bg-[#f0f0f0]">
            <RoomPanel />
            <Canvas />
          </div>
        </div>
      </div>
      <Taskbar />
    </div>
  );
}
